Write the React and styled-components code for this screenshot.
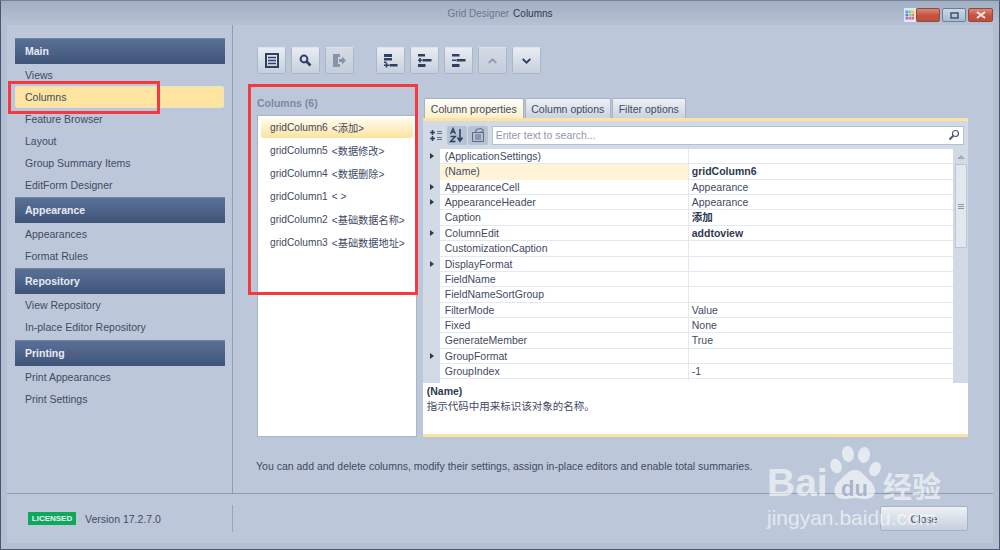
import React from 'react'
import styled, { createGlobalStyle } from 'styled-components'

const navGroups = [
  { title: 'Main', items: ['Views', 'Columns', 'Feature Browser', 'Layout', 'Group Summary Items', 'EditForm Designer'] },
  { title: 'Appearance', items: ['Appearances', 'Format Rules'] },
  { title: 'Repository', items: ['View Repository', 'In-place Editor Repository'] },
  { title: 'Printing', items: ['Print Appearances', 'Print Settings'] },
]

const columns = [
  ['gridColumn6', '<添加>'],
  ['gridColumn5', '<数据修改>'],
  ['gridColumn4', '<数据删除>'],
  ['gridColumn1', '< >'],
  ['gridColumn2', '<基础数据名称>'],
  ['gridColumn3', '<基础数据地址>'],
]

const properties = [
  { name: '(ApplicationSettings)', arrow: true },
  { name: '(Name)', value: 'gridColumn6', bold: true, active: true },
  { name: 'AppearanceCell', value: 'Appearance', arrow: true },
  { name: 'AppearanceHeader', value: 'Appearance', arrow: true },
  { name: 'Caption', value: '添加', bold: true },
  { name: 'ColumnEdit', value: 'addtoview', bold: true, arrow: true },
  { name: 'CustomizationCaption' },
  { name: 'DisplayFormat', arrow: true },
  { name: 'FieldName' },
  { name: 'FieldNameSortGroup' },
  { name: 'FilterMode', value: 'Value' },
  { name: 'Fixed', value: 'None' },
  { name: 'GenerateMember', value: 'True' },
  { name: 'GroupFormat', arrow: true },
  { name: 'GroupIndex', value: '-1' },
]

const Global = createGlobalStyle`
  html, body { margin: 0; padding: 0; }
  body {
    width: 1000px;
    height: 550px;
    overflow: hidden;
    font-family: "Liberation Sans", "Noto Sans CJK SC", sans-serif;
    font-size: 10.5px;
    color: #3f4a63;
  }
`

const Win = styled.div`
  position: relative;
  box-sizing: border-box;
  width: 1000px;
  height: 550px;
  display: flex;
  flex-direction: column;
  padding: 0 6px 6px;
  background: #b4c0d2;
  border: 1px solid #4a5670;
  border-top-color: #76819a;
`

const TitleBar = styled.div`
  flex: 0 0 24px;
  box-sizing: border-box;
  margin: 0 -6px;
  padding: 0 6px;
  display: flex;
  align-items: center;
  justify-content: center;
  gap: 4px;
  font-size: 10px;
  position: relative;
  background: linear-gradient(#a2aec2, #b6c2d4);
  color: #6c7890;
`

const TitleStrong = styled.span`
  color: #2e3950;
`

const Controls = styled.div`
  position: absolute;
  top: 7px;
  right: 6px;
  display: flex;
  gap: 2px;
`

const Palette = styled.svg`
  display: block;
  margin-right: -2px;
`

const WinBtn = styled.div`
  box-sizing: border-box;
  width: ${p => p.$w}px;
  height: 14px;
  border: 1px solid ${p => (p.$red ? '#8d4a45' : '#6d7f98')};
  border-radius: 2px;
  display: flex;
  align-items: center;
  justify-content: center;
  background: ${p =>
    p.$red ? 'linear-gradient(#d9897c, #c8503c 55%, #b9523f)' : 'linear-gradient(#cbd8e6, #a6bbd2)'};
`

const Body = styled.div`
  flex: 1;
  display: flex;
  min-height: 0;
  background: #bcc8da;
`

const Sidebar = styled.nav`
  box-sizing: border-box;
  width: 226px;
  padding: 13px 7px 0 8px;
  border-right: 1px solid #8f9cb2;
`

const GroupHeader = styled.div`
  height: 26px;
  padding: 0 0 1px 10px;
  display: flex;
  align-items: center;
  font-weight: bold;
  color: #e6ebf3;
  background: linear-gradient(#5a7096, #3f5479);
  border-top: 1px solid #6f83a5;
  box-sizing: border-box;
`

const NavList = styled.div`
  padding-bottom: 1.2px;
`

const NavItem = styled.div`
  height: 22px;
  padding-left: 10px;
  display: flex;
  align-items: center;
  box-sizing: border-box;
  ${p => p.$active && 'background: #fee49e; border: 1px solid #e6e4d0; border-radius: 2px; padding-left: 9px; margin-right: 1px;'}
`

const Main = styled.div`
  flex: 1;
  display: flex;
  flex-direction: column;
  padding: 22px 25px 0 24px;
  min-width: 0;
`

const Toolbar = styled.div`
  display: flex;
  height: 27px;
  gap: 5px;
`

const ToolSpacer = styled.div`
  width: 12px;
`

const ToolBtn = styled.div`
  box-sizing: border-box;
  width: 29px;
  height: 27px;
  display: flex;
  align-items: center;
  justify-content: center;
  border: 1px solid #aab7ca;
  border-top-color: #dfe4ec;
  border-radius: 2px;
  background: linear-gradient(#e9edf3, #c6cfdd);
  ${p => p.$disabled && 'background: linear-gradient(#d5dbe5, #c3cddb);'}
`

const Panels = styled.div`
  flex: 0 0 auto;
  display: flex;
  gap: 6px;
  margin-top: 24px;
`

const ColumnsPane = styled.div`
  width: 160px;
`

const PaneLabel = styled.div`
  height: 17px;
  font-weight: bold;
  color: #7b88a3;
  line-height: 11px;
`

const ColumnList = styled.div`
  box-sizing: border-box;
  height: 322px;
  background: #fff;
  border: 1px solid #a8b4c8;
  padding: 1px 3px;
`

const ColumnRow = styled.div`
  height: 23px;
  padding-left: 9px;
  display: flex;
  align-items: center;
  gap: 4px;
  font-size: 10.2px;
  white-space: nowrap;
  overflow: hidden;
  box-sizing: border-box;
  ${p => p.$active && 'background: linear-gradient(#fffdf4, #fde39f); height: 21px; margin-bottom: 1px; border-radius: 2px;'}
`

const PropsPane = styled.div`
  width: 546px;
  display: flex;
  flex-direction: column;
`

const Tabs = styled.div`
  display: flex;
  gap: 1px;
  padding-left: 1px;
  height: 20px;
`

const Tab = styled.div`
  box-sizing: border-box;
  width: ${p => p.$w}px;
  display: flex;
  align-items: center;
  justify-content: center;
  border: 1px solid #a5b2c6;
  border-bottom: 0;
  border-radius: 2px 2px 0 0;
  background: ${p => (p.$active ? 'linear-gradient(#fdfdfb, #fdf0c8)' : 'linear-gradient(#eef1f5, #cad3e0)')};
`

const TabBody = styled.div`
  height: 319px;
  box-sizing: border-box;
  background: #d2dae6;
  border-top: 3px solid #fde39f;
  border-bottom: 3px solid #fde39f;
  display: flex;
  flex-direction: column;
`

const SearchRow = styled.div`
  height: 28px;
  display: flex;
  align-items: center;
  gap: 1px;
  padding: 0 4px 0 3px;
  box-sizing: border-box;
`

const ModeBtn = styled.div`
  width: 20px;
  height: 19px;
  display: flex;
  align-items: center;
  justify-content: center;
  border-radius: 2px;
  ${p => p.$on && 'background: #b7c3d5;'}
`

const Search = styled.div`
  flex: 1;
  height: 19px;
  margin-left: 3px;
  box-sizing: border-box;
  border: 1px solid #b4bfd0;
  background: #fff;
  display: flex;
  align-items: center;
  justify-content: space-between;
  padding: 0 3px;
  color: #8f98aa;
`

const GridWrap = styled.div`
  height: 234px;
  display: flex;
  overflow: hidden;
`

const Grid = styled.div`
  flex: 1;
  background: #fff;
  border-left: 17px solid #d2dae6;
  position: relative;
`

const Row = styled.div`
  position: relative;
  height: 15.37px;
  display: grid;
  grid-template-columns: 248px 1fr;
  border-bottom: 1px solid #e3e8f1;
  box-sizing: border-box;
`

const Cell = styled.div`
  padding-left: 5px;
  line-height: 15.500px;
  white-space: nowrap;
  ${p => p.$value && 'border-left: 1px solid #e3e8f1; padding-left: 3px;'}
  ${p => p.$bold && 'font-weight: bold; color: #2e3950;'}
  ${p => p.$active && 'background: #fff4d8;'}
`

const Arrow = styled.span`
  position: absolute;
  left: -10px;
  top: 4px;
  width: 0;
  height: 0;
  border-left: 4px solid #2e3950;
  border-top: 3.5px solid transparent;
  border-bottom: 3.5px solid transparent;
`

const ScrollBar = styled.div`
  width: 15px;
  display: flex;
  flex-direction: column;
  align-items: center;
  background: #d2dae6;
`

const ScrollUp = styled.div`
  margin: 6px 0 5px;
  width: 0;
  height: 0;
  border-left: 4px solid transparent;
  border-right: 4px solid transparent;
  border-bottom: 4px solid #a0abbd;
`

const Thumb = styled.div`
  width: 12px;
  height: 84px;
  box-sizing: border-box;
  border: 1px solid #bac5d5;
  background: #e3e8ef;
  display: flex;
  flex-direction: column;
  align-items: center;
  justify-content: center;
  gap: 1px;
`

const ThumbLine = styled.div`
  width: 6px;
  height: 1px;
  background: #8c97aa;
`

const Description = styled.div`
  flex: 1;
  background: #fff;
  padding: 1px 4px;
  line-height: 15px;
`

const DescTitle = styled.div`
  font-weight: bold;
  color: #2e3950;
`

const Hint = styled.div`
  margin-top: 23px;
  margin-left: -1px;
`

const Footer = styled.div`
  flex: 0 0 50px;
  box-sizing: border-box;
  background: #bcc8da;
  border-top: 1px solid #8f9cb2;
  display: flex;
  align-items: center;
  padding: 0 25px 0 21px;
`

const Licensed = styled.span`
  box-sizing: border-box;
  width: 48px;
  text-align: center;
  background: #0fa85c;
  color: #e8f7ee;
  font-size: 8px;
  font-weight: bold;
  height: 13px;
  line-height: 13px;
`

const Version = styled.span`
  width: 147px;
  padding-left: 9px;
  box-sizing: border-box;
`

const FooterRule = styled.div`
  width: 1px;
  height: 27px;
  margin-left: 9px;
  background: #98a5ba;
`

const CloseBtn = styled.div`
  margin-left: auto;
  box-sizing: border-box;
  width: 88px;
  height: 25px;
  display: flex;
  align-items: center;
  justify-content: center;
  border: 1px solid #a5b2c6;
  border-radius: 2px;
  background: linear-gradient(#eef1f5, #c6cfdd);
`

const Mark = styled.div`
  position: absolute;
  border: 3px solid #f53a3f;
  box-sizing: border-box;
  pointer-events: none;
  left: ${p => p.$x}px;
  top: ${p => p.$y}px;
  width: ${p => p.$w}px;
  height: ${p => p.$h}px;
`

const Watermark = styled.div`
  position: absolute;
  left: 766px;
  top: 443px;
  width: 190px;
  height: 90px;
  color: rgba(255, 255, 255, 0.62);
  pointer-events: none;
`

const PawSvg = styled.svg`
  position: absolute;
  left: 0;
  top: 0;
`

const Bai = styled.span`
  position: absolute;
  left: 0;
  top: 17px;
  font-size: 39px;
  font-weight: bold;
`

const Du = styled.span`
  position: absolute;
  left: 74px;
  top: 32px;
  font-size: 22px;
  font-weight: bold;
  color: #a9b6ca;
`

const Jing = styled.span`
  position: absolute;
  left: 116px;
  top: 20px;
  font-size: 29px;
  font-weight: bold;
  white-space: nowrap;
`

const Site = styled.span`
  position: absolute;
  left: 0;
  top: 62px;
  font-size: 21px;
  white-space: nowrap;
`

const ic = '#2f4160'

const icons = {
  form: (
    <svg width="14" height="15" viewBox="0 0 14 15" fill="none" stroke={ic}>
      <rect x="1" y="1" width="12" height="13" strokeWidth="2" />
      <path d="M3 4.500h8M3 7.500h8M3 10.500h8" strokeWidth="1.400" />
    </svg>
  ),
  search: (
    <svg width="13" height="13" viewBox="0 0 13 13" fill="none" stroke={ic}>
      <circle cx="5" cy="5" r="3.400" strokeWidth="2" />
      <path d="M7.500 7.500l4 4" strokeWidth="2.600" />
    </svg>
  ),
  exit: (
    <svg width="15" height="15" viewBox="0 0 15 15" fill="#8794a8">
      <path d="M1 1h7v3H6v7h2v3H1z" />
      <path d="M7 6h3V3.500L14 7.500 10 11.500V9H7z" />
    </svg>
  ),
  addTop: (
    <svg width="15" height="15" viewBox="0 0 15 15" fill={ic}>
      <path d="M1 1h8v3H1zM1 5h8v2.500H1zM1 8.500h2.500v1.500H1zM1 11.500h5V13H1zM2.700 10h1.600v4.500H2.700zM6.500 11h8v2.500h-8z" />
    </svg>
  ),
  addMid: (
    <svg width="15" height="15" viewBox="0 0 15 15" fill={ic}>
      <path d="M1 1h7v2.500H1zM1 6.500h4V8H1zM2.200 5h1.600v4.500H2.200zM5.500 6h9v2.500h-9zM1 11h7.500v3H1z" />
    </svg>
  ),
  addSub: (
    <svg width="15" height="15" viewBox="0 0 15 15" fill={ic}>
      <path d="M1 1h7.500v2.500H1zM1 6.500h4V8H1zM5.500 6h9v2.500h-9zM1 11h7.500v3H1z" />
    </svg>
  ),
  up: (
    <svg width="9" height="6" viewBox="0 0 9 6" fill="none" stroke="#8f9bb0" strokeWidth="1.800">
      <path d="M.7 5l3.800-3.700L8.300 5" />
    </svg>
  ),
  down: (
    <svg width="9" height="6" viewBox="0 0 9 6" fill="none" stroke={ic} strokeWidth="1.800">
      <path d="M.7 1l3.800 3.700L8.300 1" />
    </svg>
  ),
  cat: (
    <svg width="14" height="13" viewBox="0 0 14 13" fill="none" stroke={ic}>
      <path d="M1 3.500h5M3.500 1v5M1 9.500h5M3.500 7v5" strokeWidth="1.600" />
      <path d="M8 2.500h5M8 4.500h5M8 8.500h5M8 10.500h5" strokeWidth="1" opacity=".7" />
    </svg>
  ),
  az: (
    <svg width="15" height="16" viewBox="0 0 15 16" fill="none" stroke={ic}>
      <path d="M1.500 7L4 1.500 6.500 7M2.500 5h3M1.500 9.500h5L1.500 14.500h5" strokeWidth="1.300" />
      <path d="M11 2v11M8.500 10.500L11 14l2.500-3.500" strokeWidth="1.600" />
    </svg>
  ),
  pages: (
    <svg width="16" height="16" viewBox="0 0 16 16" fill="none" stroke="#5b6982">
      <path d="M2.500 5.500h11v9h-11zM5 8h6M5 10h6M5 12h6" />
      <path d="M6 5V2.500l5-1 3 2-3 1.500" />
    </svg>
  ),
  lens: (
    <svg width="12" height="12" viewBox="0 0 12 12" fill="none" stroke="#4e5a70">
      <circle cx="7.500" cy="4.500" r="3" strokeWidth="1.200" />
      <path d="M5.500 6.500L1.500 10.500" strokeWidth="2" />
    </svg>
  ),
}

const paletteColors = ['#5aa0e8', '#7ed07a', '#f2c84b', '#4f7fe0', '#8fd0a0', '#f09040', '#a070e0', '#f060b0', '#f06060']

export default function App() {
  return (
    <>
      <Global />
      <Win>
        <TitleBar>
          <span>Grid Designer</span>
          <TitleStrong>Columns</TitleStrong>
          <Controls>
            <Palette width="12" height="14" viewBox="0 0 12 14">
              <rect width="12" height="14" fill="#dfe8f6" />
              {paletteColors.map((c, i) => (
                <rect key={i} x={1.5 + (i % 3) * 3} y={2.5 + Math.floor(i / 3) * 3.2} width="2.600" height="2.600" fill={c} />
              ))}
            </Palette>
            <WinBtn $w={24} $red />
            <WinBtn $w={24}>
              <svg width="9" height="7" viewBox="0 0 9 7" fill="none" stroke="#3f4a63" strokeWidth="1.400">
                <rect x="1" y="1" width="7" height="5" />
              </svg>
            </WinBtn>
            <WinBtn $w={25} $red>
              <svg width="10" height="8" viewBox="0 0 10 8" fill="none" stroke="#f4ece8" strokeWidth="2">
                <path d="M1 1l8 6M9 1L1 7" />
              </svg>
            </WinBtn>
          </Controls>
        </TitleBar>
        <Body>
          <Sidebar>
            {navGroups.map(g => (
              <div key={g.title}>
                <GroupHeader>{g.title}</GroupHeader>
                <NavList>
                  {g.items.map(item => (
                    <NavItem key={item} $active={item === 'Columns'}>{item}</NavItem>
                  ))}
                </NavList>
              </div>
            ))}
          </Sidebar>
          <Main>
            <Toolbar>
              <ToolBtn>{icons.form}</ToolBtn>
              <ToolBtn>{icons.search}</ToolBtn>
              <ToolBtn $disabled>{icons.exit}</ToolBtn>
              <ToolSpacer />
              <ToolBtn>{icons.addTop}</ToolBtn>
              <ToolBtn>{icons.addMid}</ToolBtn>
              <ToolBtn>{icons.addSub}</ToolBtn>
              <ToolBtn $disabled>{icons.up}</ToolBtn>
              <ToolBtn>{icons.down}</ToolBtn>
            </Toolbar>
            <Panels>
              <ColumnsPane>
                <PaneLabel>Columns (6)</PaneLabel>
                <ColumnList>
                  {columns.map(([name, caption], i) => (
                    <ColumnRow key={name} $active={i === 0}>
                      <span>{name}</span>
                      <span>{caption}</span>
                    </ColumnRow>
                  ))}
                </ColumnList>
              </ColumnsPane>
              <PropsPane>
                <Tabs>
                  <Tab $w={100} $active>Column properties</Tab>
                  <Tab $w={86}>Column options</Tab>
                  <Tab $w={74}>Filter options</Tab>
                </Tabs>
                <TabBody>
                  <SearchRow>
                    <ModeBtn>{icons.cat}</ModeBtn>
                    <ModeBtn $on>{icons.az}</ModeBtn>
                    <ModeBtn $on>{icons.pages}</ModeBtn>
                    <Search>
                      <span>Enter text to search...</span>
                      {icons.lens}
                    </Search>
                  </SearchRow>
                  <GridWrap>
                    <Grid>
                      {properties.map(p => (
                        <Row key={p.name}>
                          {p.arrow && <Arrow />}
                          <Cell $active={p.active}>{p.name}</Cell>
                          <Cell $value $bold={p.bold}>{p.value}</Cell>
                        </Row>
                      ))}
                    </Grid>
                    <ScrollBar>
                      <ScrollUp />
                      <Thumb>
                        <ThumbLine />
                        <ThumbLine />
                        <ThumbLine />
                      </Thumb>
                    </ScrollBar>
                  </GridWrap>
                  <Description>
                    <DescTitle>(Name)</DescTitle>
                    <div>指示代码中用来标识该对象的名称。</div>
                  </Description>
                </TabBody>
              </PropsPane>
            </Panels>
            <Hint>You can add and delete columns, modify their settings, assign in-place editors and enable total summaries.</Hint>
          </Main>
        </Body>
        <Footer>
          <Licensed>LICENSED</Licensed>
          <Version>Version 17.2.7.0</Version>
          <FooterRule />
          <CloseBtn>Close</CloseBtn>
        </Footer>
        <Mark $x={7} $y={80} $w={152} $h={33} />
        <Mark $x={247} $y={83} $w={170} $h={211} />
        <Watermark>
          <PawSvg width="190" height="60" viewBox="0 0 190 60">
            <g fill="rgba(255,255,255,0.62)">
              <ellipse cx="69" cy="22" rx="5.500" ry="7.500" transform="rotate(-20 69 22)" />
              <ellipse cx="81" cy="10" rx="6" ry="8" transform="rotate(-8 81 10)" />
              <ellipse cx="97" cy="11" rx="6" ry="8" transform="rotate(8 97 11)" />
              <ellipse cx="108" cy="25" rx="5.500" ry="7.500" transform="rotate(25 108 25)" />
              <path d="M88 26c6 0 9 5 14 10 9 8 8 19-4 19-4 0-6-1-10-1s-6 1-10 1c-12 0-14-11-5-19 5-5 9-10 15-10z" />
            </g>
          </PawSvg>
          <Bai>Bai</Bai>
          <Du>du</Du>
          <Jing>经验</Jing>
          <Site>jingyan.baidu.com</Site>
        </Watermark>
      </Win>
    </>
  )
}
